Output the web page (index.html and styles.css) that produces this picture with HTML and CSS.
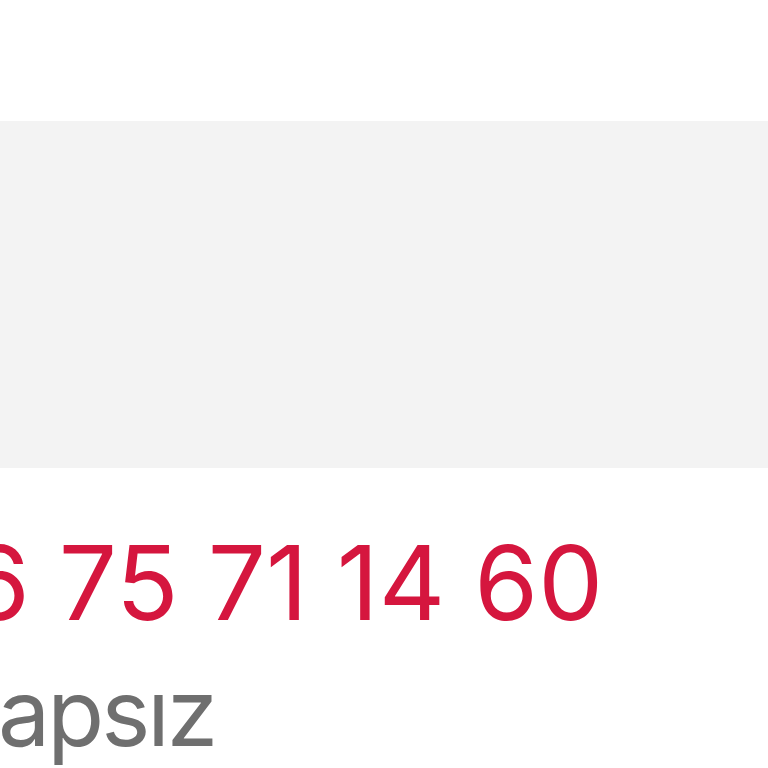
FILE: index.html
```html
<!DOCTYPE html>
<html lang="tr">
<head>
<meta charset="utf-8">
<link rel="stylesheet" href="styles.css">
</head>
<body>
<div class="page">
  <div class="top"></div>
  <div class="banner"></div>
  <div class="info">
    <div class="phone">6 75 71 14 60</div>
    <div class="status">apsız</div>
  </div>
</div>
</body>
</html>
```
FILE: styles.css
```css
html, body {
  margin: 0;
  padding: 0;
  background: #ffffff;
  overflow: hidden;
}
.page {
  width: 768px;
  height: 768px;
  overflow: hidden;
  display: flex;
  flex-direction: column;
  font-family: Inter, "Liberation Sans", Arial, sans-serif;
}
.top {
  height: 121px;
  flex: none;
}
.banner {
  height: 347px;
  flex: none;
  background: #f3f3f3;
}
.info {
  flex: none;
  display: flex;
  flex-direction: column;
  white-space: nowrap;
}
.phone {
  margin-top: 63px;
  margin-left: -34px;
  font-size: 103px;
  line-height: 103px;
  color: #d5163e;
}
.status {
  margin-top: 32px;
  margin-left: -2px;
  font-size: 93px;
  line-height: 93px;
  letter-spacing: -3px;
  color: #6f6f6f;
}
```
